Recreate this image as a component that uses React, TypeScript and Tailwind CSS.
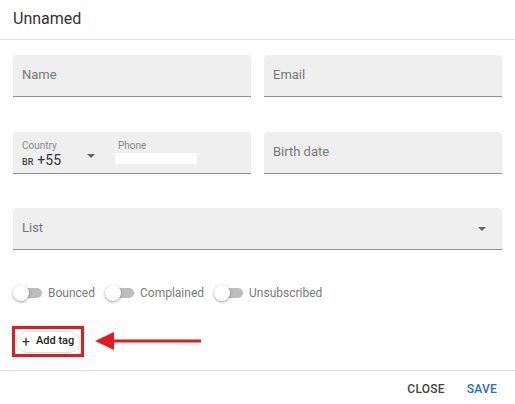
import React from "react";

function Field({ label }: { label: string }) {
  return (
    <div className="h-[42px] bg-[#efefef] rounded-t-[4px] border-b border-[#8f8f8f] flex items-center px-[9px]">
      <span className="text-[13px] text-[#777] -mt-[2px]">{label}</span>
    </div>
  );
}

function Caret() {
  return <span className="inline-block w-0 h-0 border-l-[4px] border-r-[4px] border-t-[4px] border-l-transparent border-r-transparent border-t-[#666]" />;
}

function Switch({ label }: { label: string }) {
  return (
    <div className="flex items-center gap-[6px]">
      <div className="relative w-[29px] h-[16px] flex items-center">
        <div className="ml-[7px] w-[22px] h-[10px] rounded-full bg-[#bdbdbd]" />
        <div className="absolute left-0 top-0 w-[16px] h-[16px] rounded-full bg-white shadow-[0_1px_3px_rgba(0,0,0,0.4)]" />
      </div>
      <span className="text-[12px] text-[#7a7a7a]">{label}</span>
    </div>
  );
}

export default function App() {
  return (
    <div className="w-[515px] h-[404px] bg-white overflow-hidden flex flex-col" style={{ fontFamily: "Roboto, 'Noto Sans', sans-serif" }}>
      <div className="h-[40px] border-b border-[#e0e0e0] px-[13px] pt-[7px]">
        <span className="text-[16px] text-[#333]">Unnamed</span>
      </div>
      <div className="px-[13px] pt-[15px] flex flex-col">
        <div className="grid grid-cols-2 gap-x-[13px]">
          <Field label="Name" />
          <Field label="Email" />
        </div>
        <div className="grid grid-cols-2 gap-x-[13px] mt-[35px]">
          <div className="h-[42px] bg-[#efefef] rounded-t-[4px] border-b border-[#8f8f8f] flex pl-[9px]">
            <div className="flex flex-col pt-[8px] w-[65px]">
              <span className="text-[10px] text-[#888] leading-[12px]">Country</span>
              <span className="leading-[16px] text-[#333]"><span className="text-[9px] font-medium text-[#444]">BR</span> <span className="text-[14px]">+55</span></span>
            </div>
            <div className="pt-[9px]"><Caret /></div>
            <div className="flex flex-col pt-[8px] ml-[20px]">
              <span className="text-[10px] text-[#888] leading-[12px] pl-[3px]">Phone</span>
              <div className="w-[82px] h-[11px] bg-white mt-[1px]" />
            </div>
          </div>
          <Field label="Birth date" />
        </div>
        <div className="mt-[34px] h-[42px] bg-[#efefef] rounded-t-[4px] border-b border-[#8f8f8f] flex items-center justify-between pl-[9px] pr-[16px]">
          <span className="text-[13px] text-[#777] -mt-[2px]">List</span>
          <Caret />
        </div>
        <div className="mt-[35px] flex items-center gap-[10px] h-[16px]">
          <Switch label="Bounced" />
          <Switch label="Complained" />
          <Switch label="Unsubscribed" />
        </div>
        <div className="mt-[25px] relative h-[32px]">
          <div className="absolute left-[-1px] top-0 w-[72px] h-[31px] border-[3px] border-[#e31b1b] flex items-center justify-center">
            <div className="h-[22px] w-[64px] rounded-full border border-[#e0e0e0] flex items-center pl-[5px] gap-[6px]">
              <span className="text-[14px] text-[#333] leading-none">+</span>
              <span className="text-[11px] font-medium text-[#222]">Add tag</span>
            </div>
          </div>
          <svg className="absolute left-[70px] top-[5px]" width="120" height="20" viewBox="0 0 120 20">
            <polygon points="12,10 31,1 31,19" fill="#e31b1b" />
            <rect x="30" y="8.5" width="88" height="3" fill="#e31b1b" />
          </svg>
        </div>
      </div>
      <div className="mt-auto h-[34px] border-t border-[#e0e0e0] flex items-center justify-end pr-[18px] gap-[22px] pt-[3px]">
        <span className="text-[12px] font-medium tracking-[0.02em] text-[#444]">CLOSE</span>
        <span className="text-[12px] font-medium tracking-[0.02em] text-[#1a6be0]">SAVE</span>
      </div>
    </div>
  );
}
